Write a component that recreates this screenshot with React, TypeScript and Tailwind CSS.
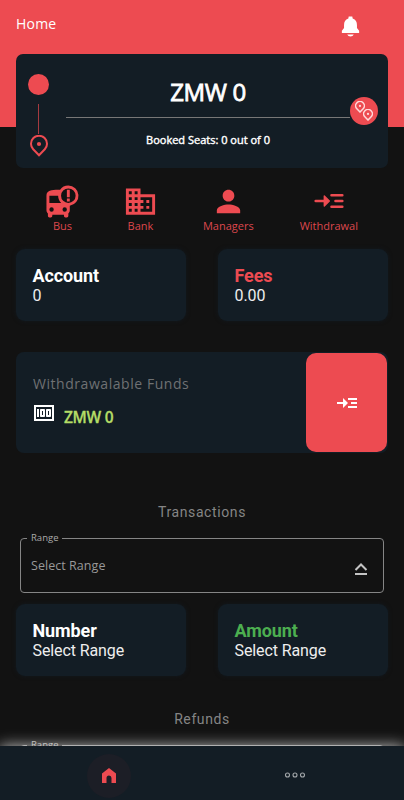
import type { ReactNode } from 'react';
import { MdBusAlert, MdDomain, MdMoney, MdPerson, MdReadMore } from 'react-icons/md';
import { IoNotificationsSharp } from 'react-icons/io5';

function PinIcon({ className, strokeWidth = 2 }: { className: string; strokeWidth?: number }) {
  return (
    <svg viewBox="0 0 18 22" className={className} fill="none" stroke="currentColor" strokeWidth={strokeWidth}>
      <path d="M9 20.2 3.2 14.3A8 8 0 1 1 14.8 14.3Z" />
      <circle cx="9" cy="9" r="2.1" fill="currentColor" stroke="none" />
    </svg>
  );
}

function WithdrawIcon() {
  return (
    <svg viewBox="0 0 30 16" className="w-[30px] h-4" fill="none" stroke="currentColor" strokeWidth="2.6" strokeLinecap="round">
      <path d="M1.7 8H10M17.5 2.3h10.8M21.5 8h6.8M17.5 13.7h10.8" />
      <path d="M10.3 3v10l5-5Z" fill="currentColor" strokeWidth="1.4" strokeLinejoin="round" />
    </svg>
  );
}

function Shortcut({ label, children }: { label: string; children: ReactNode }) {
  return (
    <button className="flex flex-col items-center text-[#ed4b51]">
      <span className="h-[34px] flex items-center justify-center">{children}</span>
      <span className="text-[11px] leading-4 text-[#dc474d]">{label}</span>
    </button>
  );
}

function StatCard({ title, value, titleClass = 'text-white' }: { title: string; value: string; titleClass?: string }) {
  return (
    <div className="w-[170px] h-[72px] rounded-[9px] bg-[#131d25] pl-[16.5px] pt-[17px] font-['Roboto',sans-serif] shadow-[0_0_4px_rgba(19,29,37,0.7)]">
      <h3 className={`text-[18px] leading-5 font-bold tracking-[-0.1px] ${titleClass}`}>{title}</h3>
      <p className="text-[16px] leading-[19px] tracking-[-0.1px] text-[#eeeeee]">{value}</p>
    </div>
  );
}

function RangeField() {
  return (
    <fieldset className="mx-5 h-[61px] rounded-[4px] border border-[#858585] pl-[7px] pr-[15px]">
      <legend className="px-1 text-[9.5px] leading-[12px] -ml-px text-[#aaaaaa]">Range</legend>
      <div className="flex items-center justify-between pl-[3px]">
        <span className="mt-[11px] text-[12.5px] leading-[18px] tracking-[0.05px] text-[#999999]">Select Range</span>
        <svg viewBox="0 0 14 14" className="mt-[18px] w-[14px] h-[14px]" fill="none" stroke="#c4c4c4" strokeWidth="2">
          <path d="m1.5 8 5.5-5.5L12.5 8M1 12h12" />
        </svg>
      </div>
    </fieldset>
  );
}

export default function App() {
  return (
    <div className="w-[404px] h-[800px] overflow-hidden flex flex-col bg-[#121212] font-['Open_Sans',sans-serif]">
      <main className="h-[746px] shrink-0 overflow-hidden">
        <header className="h-[127px] bg-[#ed4b51] flex items-start justify-between pl-4 pr-[42px] pt-[14px] text-white">
          <h1 className="text-[14px] leading-5 tracking-[0.2px]">Home</h1>
          <IoNotificationsSharp className="mt-[1px] w-[23px] h-[23px]" />
        </header>

        <section className="relative mx-4 -mt-[73px] h-[114px] rounded-[7px] bg-[#131d25] flex">
          <div className="w-[50px] shrink-0 flex flex-col items-center pr-[5px] pt-5">
            <span className="w-[21px] h-[21px] rounded-full bg-[#ed4b51]" />
            <span className="mt-[9px] w-px h-[30px] bg-[#a53a40]" />
            <PinIcon className="mt-[1px] w-[18px] h-[22px] text-[#ed4b51]" />
          </div>
          <div className="w-[284px] shrink-0 flex flex-col items-center text-white">
            <p className="h-[64px] w-full border-b border-[#777777] pt-[22px] text-center text-[24px] leading-8 tracking-[-0.4px] [-webkit-text-stroke:0.8px_currentColor]">ZMW 0</p>
            <p className="mt-[14px] text-[11px] leading-4 [-webkit-text-stroke:0.4px_currentColor]">Booked Seats: 0 out of 0</p>
          </div>
          <div className="mt-[43px] w-7 h-7 shrink-0 rounded-full bg-[#ed4b51] flex justify-center text-[#ffd9da]">
            <PinIcon className="mt-[4px] w-[10px] h-[12px]" strokeWidth={2.8} />
            <PinIcon className="-ml-[2px] mt-[12px] w-[10px] h-[12px]" strokeWidth={2.8} />
          </div>
        </section>

        <nav className="mt-4 flex justify-between pl-[47px] pr-[46px]">
          <Shortcut label="Bus"><MdBusAlert className="w-[35px] h-[35px] -mx-[2px]" /></Shortcut>
          <Shortcut label="Bank"><MdDomain className="w-[35px] h-[35px] -mx-px" /></Shortcut>
          <Shortcut label="Managers"><MdPerson className="w-[35px] h-[35px]" /></Shortcut>
          <Shortcut label="Withdrawal"><WithdrawIcon /></Shortcut>
        </nav>

        <section className="mt-[15px] flex justify-between px-4">
          <StatCard title="Account" value="0" />
          <StatCard title="Fees" value="0.00" titleClass="text-[#ed4b51]" />
        </section>

        <section className="mx-4 mt-[31px] h-[101px] rounded-[8px] bg-[#131d25] flex justify-between p-px">
          <div className="pl-4 pt-[21px]">
            <h2 className="text-[14px] leading-5 tracking-[0.55px] text-[#6f7173]">Withdrawalable Funds</h2>
            <div className="mt-[7px] flex items-start text-white">
              <MdMoney className="w-[24px] h-[24px] -ml-[1px]" />
              <span className="ml-2 mt-[6px] text-[15.5px] leading-5 font-semibold tracking-[-0.3px] text-[#b4dc66] [-webkit-text-stroke:0.3px_currentColor]">ZMW 0</span>
            </div>
          </div>
          <button className="w-[81px] rounded-[10px] bg-[#ed4b51] flex items-center justify-center text-white">
            <MdReadMore className="w-6 h-6" />
          </button>
        </section>

        <h2 className="mt-[49px] text-center font-['Roboto',sans-serif] text-[14px] leading-5 tracking-[0.6px] text-[#858585]">Transactions</h2>
        <div className="mt-[10px]"><RangeField /></div>
        <section className="mt-[11px] flex justify-between px-4">
          <StatCard title="Number" value="Select Range" />
          <StatCard title="Amount" value="Select Range" titleClass="text-[#4caf50]" />
        </section>

        <h2 className="mt-[33px] text-center font-['Roboto',sans-serif] text-[14px] leading-5 tracking-[0.6px] text-[#858585]">Refunds</h2>
        <div className="mt-[10px]"><RangeField /></div>
      </main>

      <footer className="relative h-[54px] shrink-0 bg-[#131d25] flex shadow-[0_0_14px_rgba(255,255,255,0.75)]">
        <button className="w-[217px] flex items-center justify-center pt-[5px]">
          <span className="w-11 h-11 rounded-full bg-[#1c1e26] flex items-center justify-center">
            <svg viewBox="0 0 14 15" className="w-[14px] h-[15px]" fill="#ed4b51">
              <path d="M0 5.5 7 0l7 5.5V15H9.5V10a2.5 2.5 0 0 0-5 0v5H0Z" />
            </svg>
          </span>
        </button>
        <button className="ml-[67px] flex items-center pt-[4px]">
          <svg viewBox="0 0 22 6" className="w-[22px] h-[6px]" fill="none" stroke="#a4a8ab" strokeWidth="1.1">
            <circle cx="3.5" cy="3" r="2" />
            <circle cx="11" cy="3" r="2" />
            <circle cx="18.5" cy="3" r="2" />
          </svg>
        </button>
      </footer>
    </div>
  );
}
